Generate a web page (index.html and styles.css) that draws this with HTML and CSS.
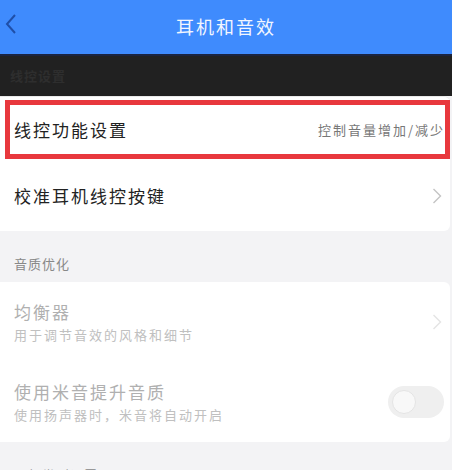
FILE: index.html
```html
<!DOCTYPE html>
<html lang="zh">
<head>
    <meta charset="UTF-8">
    <meta name="viewport" content="width=device-width, initial-scale=1.0">
    <title>耳机和音效</title>
    <link rel="stylesheet" href="styles.css">
</head>
<body>
    <header class="topbar">
        <svg class="back" width="14" height="22" viewBox="0 0 14 22">
            <path d="M11 2 L3 11 L11 20" fill="none" stroke="#1f4fa8" stroke-width="2"/>
        </svg>
        <h1>耳机和音效</h1>
    </header>
    <div class="dark-band">线控设置</div>
    <section class="card first">
        <div class="row highlight">
            <span class="title">线控功能设置</span>
            <span class="value">控制音量增加/减少</span>
        </div>
        <div class="row">
            <span class="title">校准耳机线控按键</span>
            <svg class="chevron" width="10" height="16" viewBox="0 0 10 16">
                <path d="M1.5 1 L8.5 8 L1.5 15" fill="none" stroke="#c4c4c4" stroke-width="1.4"/>
            </svg>
        </div>
    </section>
    <div class="section-label">音质优化</div>
    <section class="card">
        <div class="row two-line">
            <div class="texts">
                <span class="title dim">均衡器</span>
                <span class="sub">用于调节音效的风格和细节</span>
            </div>
            <svg class="chevron" width="10" height="16" viewBox="0 0 10 16">
                <path d="M1.5 1 L8.5 8 L1.5 15" fill="none" stroke="#e4e4e4" stroke-width="1.4"/>
            </svg>
        </div>
        <div class="row two-line">
            <div class="texts">
                <span class="title dim">使用米音提升音质</span>
                <span class="sub">使用扬声器时，米音将自动开启</span>
            </div>
            <div class="toggle"><span class="knob"></span></div>
        </div>
    </section>
    <div class="section-label">耳机类型设置</div>
</body>
</html>
```

FILE: styles.css
```css
body {
    margin: 0;
    font-family: "Noto Sans CJK SC", "Noto Sans", sans-serif;
    background: #f3f3f5;
    width: 452px;
    height: 470px;
    overflow: hidden;
}
.topbar {
    height: 54px;
    background: #3f8bfd;
    display: flex;
    align-items: center;
    justify-content: center;
    position: relative;
}
.topbar h1 {
    margin: 0 0 2px;
    font-size: 18px;
    font-weight: 400;
    color: #f2f6ff;
    letter-spacing: 2px;
}
.back {
    position: absolute;
    left: 4px;
    top: 13px;
}
.dark-band {
    height: 42px;
    box-sizing: border-box;
    background: #212121;
    border-top: 2px solid #1b2440;
    color: #2e2e2e;
    font-size: 13px;
    font-weight: 700;
    letter-spacing: 1px;
    padding-left: 10px;
    line-height: 40px;
}
.card {
    background: #fff;
    margin: 0 2px 0 0;
    border-radius: 0 6px 6px 0;
}
.card.first {
    padding-top: 3px;
    border-top: 1px solid #e9e9e9;
}
.row {
    display: flex;
    align-items: center;
    justify-content: space-between;
    padding: 0 8px 0 14px;
    height: 70px;
}
.row.highlight {
    height: 59px;
    margin: 0 0 2px 5px;
    border: 5px solid #e8383d;
    box-sizing: border-box;
    padding-left: 4px;
    padding-right: 0;
}
.title {
    font-size: 17px;
    line-height: 22px;
    color: #222;
    letter-spacing: 2px;
}
.value {
    font-size: 13px;
    color: #777;
    letter-spacing: 2px;
}
.section-label {
    padding: 23px 14px 0;
    height: 28px;
    font-size: 13px;
    color: #888;
    letter-spacing: 1px;
}
.row.two-line {
    height: 80px;
}
.texts {
    display: flex;
    flex-direction: column;
    gap: 3px;
}
.title.dim {
    color: #b0b0b0;
}
.sub {
    font-size: 13px;
    line-height: 18px;
    color: #c0c0c0;
    letter-spacing: 2px;
}
.toggle {
    width: 56px;
    height: 32px;
    border-radius: 16px;
    background: #efefef;
    position: relative;
    margin-right: -2px;
}
.knob {
    position: absolute;
    left: 4px;
    top: 4px;
    width: 24px;
    height: 24px;
    border-radius: 50%;
    background: #f8f8f8;
    border: 1px solid #e4e4e4;
    box-sizing: border-box;
}
```
